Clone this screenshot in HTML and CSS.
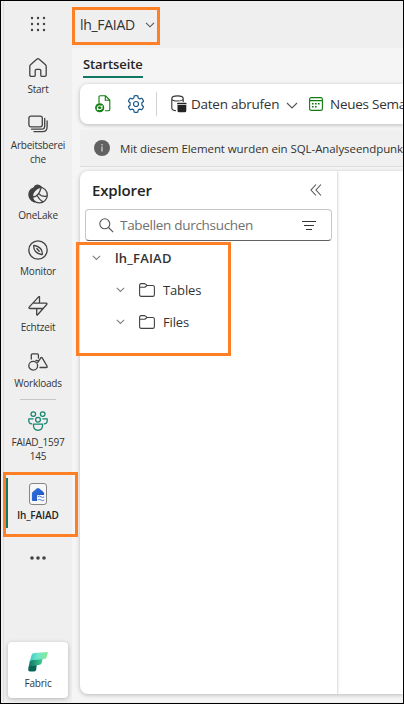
FILE: index.html
```
<!DOCTYPE html>
<html lang="de">
<head>
<meta charset="utf-8">
<title>lh_FAIAD</title>
<link rel="stylesheet" href="styles.css">
</head>
<body>
<div class="window">
  <nav class="rail">
    <div class="launcher">
      <svg width="16" height="16" viewBox="0 0 16 16" fill="#424242"><circle cx="2" cy="2" r="1.2"/><circle cx="8" cy="2" r="1.2"/><circle cx="14" cy="2" r="1.2"/><circle cx="2" cy="8" r="1.2"/><circle cx="8" cy="8" r="1.2"/><circle cx="14" cy="8" r="1.2"/><circle cx="2" cy="14" r="1.2"/><circle cx="8" cy="14" r="1.2"/><circle cx="14" cy="14" r="1.2"/></svg>
    </div>
    <a class="item">
      <svg class="line" width="20" height="20" viewBox="0 0 20 20"><path d="M1.8 8.3Q1.8 7.4 2.5 6.8L8.8 1.2Q10 .2 11.2 1.2L17.5 6.8Q18.2 7.4 18.2 8.3V17Q18.2 18.4 16.8 18.4H14Q12.8 18.4 12.8 17.2V12.5Q12.8 11.3 11.6 11.3H8.4Q7.2 11.3 7.2 12.5V17.2Q7.2 18.4 6 18.4H3.2Q1.8 18.4 1.8 17Z"/></svg>
      <span>Start</span>
    </a>
    <a class="item tall">
      <svg class="line" width="20" height="20" viewBox="0 0 20 20"><rect x=".9" y="2.2" width="13.4" height="10.6" rx="2"/><path d="M3.5 15.2H13.5Q16.7 15.2 16.7 12V4.5M6 17.6H14.5Q19.1 17.6 19.1 13V7"/></svg>
      <span>Arbeitsberei<br>che</span>
    </a>
    <a class="item">
      <svg class="line" width="20" height="20" viewBox="0 0 20 20"><circle cx="11.4" cy="11" r="7.9"/><path fill="#424242" d="M5.5 4.2Q8.5-1.2 13.3 3Q8 3.8 5 9.2Q3.5 14 6.5 18Q1 15.8.9 10.5Q1.2 5.6 5.5 4.2Z"/><path d="M5 13Q10.5 12.6 13 4.2M10.8 9.6Q13.5 13 18.9 12.2M9.3 11.8Q11 15.5 14.5 17.6"/></svg>
      <span>OneLake</span>
    </a>
    <a class="item">
      <svg class="line" width="20" height="20" viewBox="0 0 20 20"><circle cx="10" cy="10" r="9.2"/><path d="M5.7 6.2Q5.5 5.3 6.5 5.5Q14.5 7.2 14.4 13.8Q14.4 14.7 13.5 14.5Q5.5 12.6 5.7 6.2ZM8.8 8.5L11.2 11.2"/></svg>
      <span>Monitor</span>
    </a>
    <a class="item">
      <svg class="line" width="20" height="20" viewBox="0 0 20 20"><path d="M11.5.8V7.2H18Q19.7 7.4 18.5 8.8L9.6 18.7Q8.7 19.6 8.7 18.2V12.5H2Q.2 12.3 1.4 10.9L10.4 1.1Q11.3.2 11.5.8ZM11.5 7.2H6M8.7 12.5H14.5"/></svg>
      <span>Echtzeit</span>
    </a>
    <a class="item short">
      <svg class="line" width="20" height="20" viewBox="0 0 20 20"><circle cx="5.2" cy="13.7" r="4.4"/><path d="M3.3 7V3Q3.3 1.8 4.5 1.8H9.2Q10.4 1.8 10.4 3V6M8 8.5L9.8 8.7M12.8 5.8Q13.5 4.8 14.2 5.8L19 14Q19.6 15.5 18.2 15.5H12M12.8 5.8L9.8 10.4"/></svg>
      <span>Workloads</span>
    </a>
    <div class="rule"></div>
    <a class="item tall">
      <svg class="line teal" width="20" height="20" viewBox="0 0 20 20"><circle cx="5.3" cy="3.1" r="2.3"/><circle cx="14.7" cy="3.1" r="2.3"/><circle cx="10" cy="8.7" r="2.4"/><path d="M5.5 13.2H14.5V15.2Q14 19.3 10 19.3T5.5 15.2ZM5.2 7.8H.8V10Q1 12.7 3.8 12.9M14.8 7.8H19.2V10Q19 12.7 16.2 12.9"/></svg>
      <span>FAIAD_1597<br>145</span>
    </a>
    <a class="item current">
      <svg width="20" height="22" viewBox="0 0 20 22"><defs><linearGradient id="house" x1="0" y1="0" x2="1" y2="1"><stop stop-color="#3274df"/><stop offset="1" stop-color="#1d50bd"/></linearGradient></defs><rect x="1.5" y=".5" width="17" height="21" rx="2.5" fill="#f7f7f7" stroke="#858585"/><path fill="url(#house)" d="M3.9 10.4Q3.9 9.5 4.6 8.9L8.7 5.4Q10 4.5 11.3 5.4L15.4 8.9Q16.1 9.5 16.1 10.4V12H10Q9 12 9 13V18H5Q3.9 18 3.9 16.9Z"/><path fill="none" stroke="#3b70d0" stroke-width=".9" d="M9.8 13.8q1.6-1.4 3.2 0t3.2 0M9.8 17q1.6-1.4 3.2 0t3.2 0"/></svg>
      <span>lh_FAIAD</span>
    </a>
    <div class="more"><svg width="16" height="4" viewBox="0 0 16 4" fill="#424242"><circle cx="2" cy="2" r="1.8"/><circle cx="8" cy="2" r="1.8"/><circle cx="14" cy="2" r="1.8"/></svg></div>
    <a class="fabric">
      <svg width="20" height="20" viewBox="0 0 20 20"><defs><linearGradient id="mint"><stop stop-color="#36c9bd"/><stop offset=".45" stop-color="#6fe5ce"/><stop offset="1" stop-color="#8be88f"/></linearGradient><linearGradient id="mid"><stop stop-color="#0b7167"/><stop offset="1" stop-color="#43ce91"/></linearGradient></defs><path fill="#096657" d="M1 13.5L8.7 12.8L8.2 18Q7.4 19.6 5.7 19.6H2Q0 19.4.2 17.6Z"/><path fill="url(#mid)" d="M2 8L14.7 6.5L13.8 10.8Q13 13 10.7 13.1L3 14Q.9 14.4.4 16.4Z"/><path fill="url(#mint)" d="M3.6 3.1Q4.2 1 6.4.9L20 0L18.8 4.8Q18.2 7 16 7.1L4.8 8Q2.3 8.2 1.3 11Z"/></svg>
      <span>Fabric</span>
    </a>
    <div class="mark mark-rail"></div>
  </nav>

  <div class="content">
    <header class="top">
      <span>lh_FAIAD</span>
      <svg class="thin" width="10" height="6" viewBox="0 0 10 6"><path d="M1 .8L5 4.8L9 .8"/></svg>
      <div class="mark mark-title"></div>
    </header>
    <main class="page">
      <div class="tabs"><span class="tab">Startseite</span></div>
      <div class="toolbar">
        <svg class="refresh" width="16" height="18" viewBox="0 0 16 18" fill="none" stroke="#107c10" stroke-width="1.1"><path d="M4 8V2Q4 .8 5.2.8H10.5L14.8 5V14.5Q14.8 15.7 13.6 15.7H10M10.3 1V5.2H14.6"/><circle cx="4.7" cy="12.7" r="4" fill="#107c10"/><path stroke="#fff" d="M2.3 12.3Q4.5 9.2 7 12.3V10.2M7.1 13.2Q4.9 16.2 2.4 13.2V15.3"/></svg>
        <svg class="gear" width="18" height="18" viewBox="0 0 18 18" fill="none" stroke="#1a5a8c" stroke-width="1.2" stroke-linejoin="round"><path d="M7.2.9Q9 .4 10.8.9L11.2 3.1L12.6 3.9L14.7 3.2Q16.1 4.5 16.6 6.3L14.9 7.8V10.2L16.6 11.7Q16.1 13.5 14.7 14.8L12.6 14.1L11.2 14.9L10.8 17.1Q9 17.6 7.2 17.1L6.8 14.9L5.4 14.1L3.3 14.8Q1.9 13.5 1.4 11.7L3.1 10.2V7.8L1.4 6.3Q1.9 4.5 3.3 3.2L5.4 3.9L6.8 3.1Z"/><circle cx="9" cy="9" r="2.5"/></svg>
        <i class="sep"></i>
        <svg class="db" width="16" height="18" viewBox="0 0 16 18"><path fill="none" stroke="#333" stroke-width="1.1" d="M.8 3.4C.8 0 12.2 0 12.2 3.4S.8 6.8.8 3.4V13Q.9 15.4 5 15.7M12.2 3.4V7"/><path fill="#242424" d="M6 9.2V8.8Q6 7.7 7.1 7.7H14.5Q15.6 7.7 15.6 8.8V9.2ZM6.5 10H15.3V15.7Q15.3 17.3 13.7 17.3H8.1Q6.5 17.3 6.5 15.7Z"/></svg>
        <span class="get">Daten abrufen</span>
        <svg class="thin caret" width="12" height="7" viewBox="0 0 12 7"><path d="M1 1L6 6L11 1"/></svg>
        <svg class="model" width="14" height="14" viewBox="0 0 14 14"><path fill="none" stroke="#107c10" stroke-width="1.1" d="M.6 3.6H13.4M2.3.6H11.7Q13.4.6 13.4 2.3V11.7Q13.4 13.4 11.7 13.4H2.3Q.6 13.4.6 11.7V2.3Q.6.6 2.3.6Z"/><path fill="#107c10" d="M6 6h1.6v1.6H6zM9 6h1.6v1.6H9zM3 9h1.6v1.6H3zM6 9h1.6v1.6H6zM3 6h1.6v1.6H3z"/></svg>
        <span class="new">Neues Sema</span>
      </div>
      <div class="info">
        <svg width="16" height="16" viewBox="0 0 16 16"><circle cx="8" cy="8" r="8" fill="#616161"/><path fill="#d8d8d8" d="M7.4 4.1h1.2v1.3H7.4zM7.4 6.6h1.2v5H7.4z"/></svg>
        <span>Mit diesem Element wurden ein SQL-Analyseendpunk</span>
      </div>
      <div class="workspace">
        <aside class="explorer">
          <div class="heading"><h2>Explorer</h2><svg class="thin" width="12" height="12" viewBox="0 0 12 12"><path d="M6 .5L1 6L6 11.5M11 .5L6 6L11 11.5"/></svg></div>
          <div class="search">
            <svg class="thin" width="15" height="15" viewBox="0 0 15 15"><circle cx="5.8" cy="5.8" r="5"/><path d="M9.5 9.5L14.2 14.2"/></svg>
            <span>Tabellen durchsuchen</span>
            <svg width="14" height="9" viewBox="0 0 14 9"><path stroke="#333" d="M0 .5H14M2 4.5H12M4 8.5H10"/></svg>
          </div>
          <div class="tree">
            <div class="node root"><svg class="chev" width="9" height="6" viewBox="0 0 9 6"><path d="M.8.8L4.5 4.5L8.2.8"/></svg><b>lh_FAIAD</b></div>
            <div class="node"><svg class="chev" width="9" height="6" viewBox="0 0 9 6"><path d="M.8.8L4.5 4.5L8.2.8"/></svg><svg class="folder" width="16" height="14" viewBox="0 0 16 14"><path d="M.6 4V2.3Q.6.6 2.3.6H5.4Q6 .6 6.5 1.1L8 2.5H13.7Q15.4 2.5 15.4 4.2V11.7Q15.4 13.4 13.7 13.4H2.3Q.6 13.4.6 11.7V4.2H5.4Q6 4.2 6.5 3.8L8 2.5"/></svg><span>Tables</span></div>
            <div class="node"><svg class="chev" width="9" height="6" viewBox="0 0 9 6"><path d="M.8.8L4.5 4.5L8.2.8"/></svg><svg class="folder" width="16" height="14" viewBox="0 0 16 14"><path d="M.6 4V2.3Q.6.6 2.3.6H5.4Q6 .6 6.5 1.1L8 2.5H13.7Q15.4 2.5 15.4 4.2V11.7Q15.4 13.4 13.7 13.4H2.3Q.6 13.4.6 11.7V4.2H5.4Q6 4.2 6.5 3.8L8 2.5"/></svg><span>Files</span></div>
            <div class="mark mark-tree"></div>
          </div>
        </aside>
        <section class="canvas"></section>
      </div>
    </main>
  </div>
</div>
</body>
</html>
```
FILE: styles.css
```
* { box-sizing: border-box; }
body { margin: 0; font-family: "Open Sans", "Noto Sans", sans-serif; font-size: 13px; color: #333; }
svg { display: block; flex: none; }
.window { display: flex; width: 404px; height: 704px; border: 1px solid #000; padding: 0 0 1px 2px; background: #f0f0f0; overflow: hidden; }
.line { fill: none; stroke: #424242; stroke-width: 1.3; stroke-linejoin: round; stroke-linecap: round; }
.teal { stroke: #168570; stroke-width: 1.25; }
.thin { fill: none; stroke: #555; stroke-width: 1.1; }
.mark { position: absolute; border: 3px solid #ff7f27; pointer-events: none; }

.rail { position: relative; z-index: 2; width: 69px; flex: none; display: flex; flex-direction: column; align-items: center; background: #efefef; border-left: 1px solid #e2dddd; }
.launcher { height: 51px; padding-top: 15px; }
.item { position: relative; width: 100%; height: 56px; padding-top: 6px; display: flex; flex-direction: column; align-items: center; gap: 4px; }
.item span, .fabric span { font-size: 10px; line-height: 14px; text-align: center; letter-spacing: -.22px; white-space: nowrap; }
.tall { height: 70px; }
.short { height: 53px; }
.rule { width: 36px; height: 1px; margin-bottom: 5px; background: #c7c7c7; flex: none; }
.current { height: 50px; margin-top: 3px; padding-top: 5px; gap: 3px; flex: none; }
.current::before { content: ""; position: absolute; left: 2px; top: 0; width: 2px; height: 50px; background: #117865; }
.item.current span { font-weight: 600; color: #242424; letter-spacing: -.1px; }
.more { margin-top: 28px; }
.fabric { width: 60px; height: 56px; margin-top: auto; margin-bottom: 4px; padding-top: 10px; display: flex; flex-direction: column; align-items: center; gap: 4px; background: #fff; border-radius: 4px; box-shadow: 0 1px 4px rgba(0,0,0,.25); }
.mark-rail { left: -1px; top: 471px; width: 75px; height: 65px; }

.content { flex: 1; min-width: 0; display: flex; flex-direction: column; }
.top { position: relative; height: 47px; display: flex; align-items: center; gap: 10px; padding-left: 8px; background: #efefef; }
.top span { font-size: 14px; letter-spacing: -.3px; }
.mark-title { left: 0; top: 6px; width: 88px; height: 38px; }
.page { flex: 1; min-height: 0; display: flex; flex-direction: column; padding-left: 8px; background: #f5f5f5; }
.tabs { height: 36px; padding: 6px 3px 0; }
.tab { display: inline-block; height: 24px; border-bottom: 2px solid #117865; line-height: 20px; font-size: 13px; letter-spacing: -.1px; font-weight: 600; color: #242424; }
.toolbar { height: 40px; flex: none; display: flex; align-items: center; padding-left: 15px; background: #fff; border-radius: 8px 0 0 8px; box-shadow: 0 1px 4px rgba(0,0,0,.25); white-space: nowrap; }
.toolbar span { flex: none; font-size: 13.5px; letter-spacing: -.25px; }
.gear { margin-left: 16px; }
.sep { width: 1px; height: 24px; margin: 0 14px 0 11px; background: #d1d1d1; flex: none; }
.get { width: 90px; margin-left: 4px; }
.caret { margin: 3px 0 0 5px; }
.model { margin-left: 11px; }
.new { margin-left: 7px; }
.info { height: 37px; flex: none; margin-top: 6px; padding-left: 14px; display: flex; align-items: center; gap: 10px; background: #f0f0f0; border-bottom: 1px solid #dcdcdc; font-size: 11.5px; letter-spacing: -.08px; white-space: nowrap; }
.workspace { height: 523px; flex: none; margin-top: 4px; display: flex; background: #fff; border-radius: 8px 0 0 8px; box-shadow: 0 1px 4px rgba(0,0,0,.25); }
.explorer { width: 258px; border-right: 1px solid #e3e3e3; box-shadow: 2px 0 2px -1px rgba(0,0,0,.06); border-radius: 8px 0 0 8px; }
.heading { height: 38px; display: flex; align-items: center; justify-content: space-between; padding: 0 15px 0 12px; }
.heading h2 { margin: 0; font-size: 15px; font-weight: 600; color: #242424; letter-spacing: -.15px; }
.search { width: 247px; height: 32px; margin-left: 5px; padding: 0 15px 0 13px; display: flex; align-items: center; border: 1px solid #c7c7c7; border-bottom-color: #616161; border-radius: 4px; }
.search span { flex: 1; margin-left: 6px; font-size: 13.5px; letter-spacing: -.3px; color: #707070; }
.tree { position: relative; padding-top: 1px; }
.node { height: 32px; display: flex; align-items: center; padding-left: 36px; font-size: 13px; }
.node span { letter-spacing: -.15px; }
.root { padding-left: 12px; }
.root b { margin-left: 14px; font-weight: 600; letter-spacing: .2px; }
.chev { fill: none; stroke: #808080; stroke-width: 1.1; }
.folder { margin: 0 8px 0 14px; fill: none; stroke: #424242; stroke-width: 1.1; }
.mark-tree { left: -4px; top: 1px; width: 155px; height: 114px; }
```
